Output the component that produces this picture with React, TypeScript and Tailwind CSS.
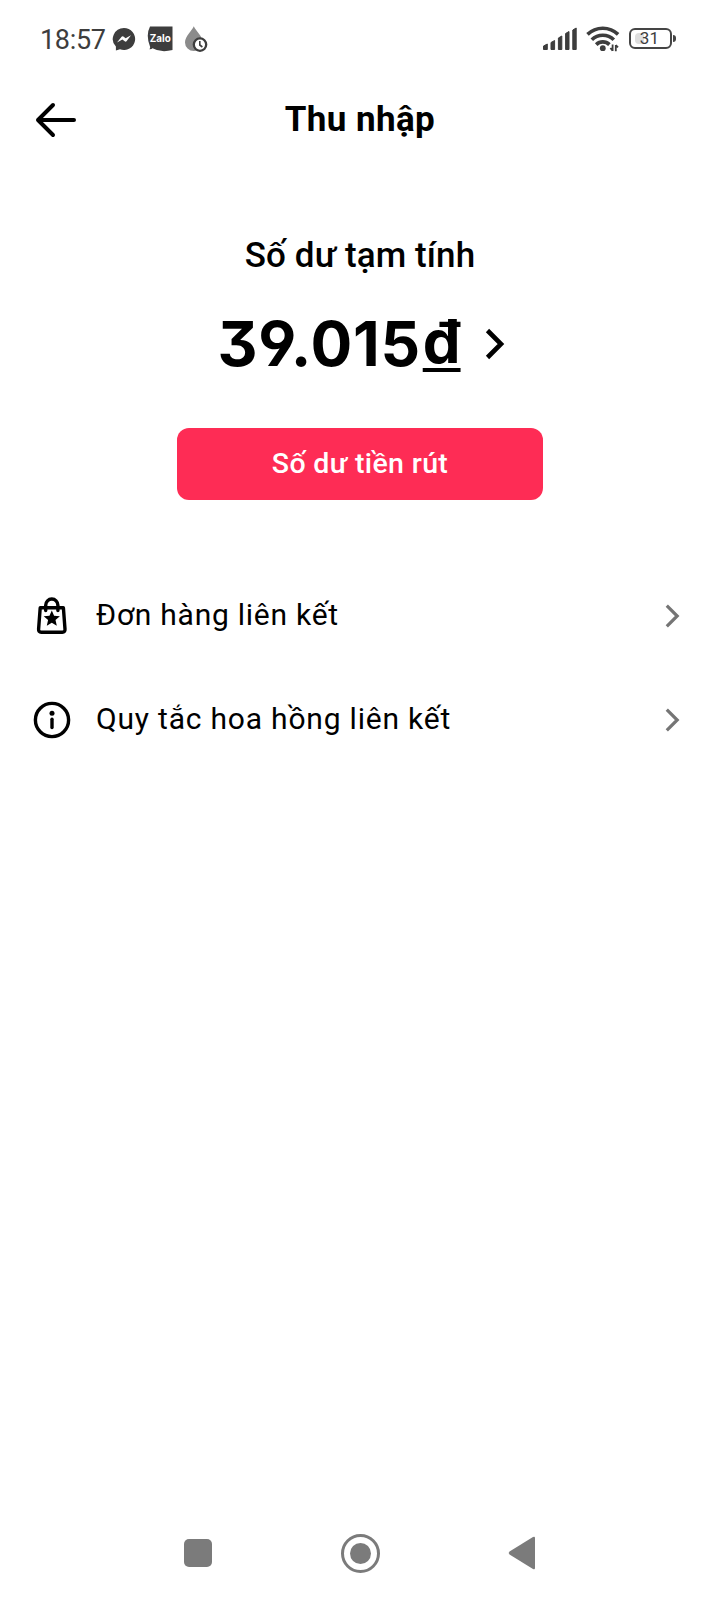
import type { ReactNode } from 'react';

const menuItems = [
  { label: 'Đơn hàng liên kết', icon: <BagIcon />, spacing: 'tracking-[0.75px]' },
  { label: 'Quy tắc hoa hồng liên kết', icon: <InfoIcon />, spacing: 'tracking-[0.8px]' },
];

function BagIcon() {
  return (
    <svg width="38" height="38" viewBox="0 0 38 38" className="overflow-visible" fill="none" stroke="#000" strokeWidth="3.4" strokeLinecap="round" strokeLinejoin="round">
      <path d="M7.2 10.8H30.4L32 32.2Q32.2 35.2 29.4 35.2H8.2Q5.4 35.2 5.6 32.2Z" />
      <path d="M12.7 13.6V8.2A6.1 6.2 0 0 1 24.9 8.2V13.6" />
      <path d="M18.8 13.4l2.3 5.4 5.8.5-4.4 3.8 1.3 5.6-5-3-5 3 1.3-5.6-4.4-3.8 5.8-.5z" fill="#000" stroke="none" />
    </svg>
  );
}

function InfoIcon() {
  return (
    <svg width="38" height="38" viewBox="0 0 38 38" fill="none" stroke="#000" strokeWidth="3.4">
      <circle cx="19" cy="19" r="16.6" />
      <circle cx="19" cy="12.2" r="2.5" fill="#000" stroke="none" />
      <path d="M19 18.2V26.6" strokeLinecap="round" />
    </svg>
  );
}

function StatusBar() {
  return (
    <div className="h-[78px] pl-10 pr-[44px] flex items-center justify-between text-[#3d3d3d]">
      <div className="flex items-center">
        <span className="w-[72px] mt-[2px] text-[27px] leading-none tracking-[-0.3px]">18:57</span>
        <svg width="24" height="26" viewBox="0 0 24 26" className="shrink-0">
          <path d="M12 2A11.2 11 0 0 0 3.9 20.6V24.4L8 23.3A11.2 11 0 1 0 12 2Z" fill="#3d3d3d" />
          <path d="M5 16.4L9.6 10.7Q10.4 9.9 11.4 10.6L13.6 12.3L19 9.3L14.5 15.2Q13.7 16 12.7 15.3L10.4 13.6Z" fill="#fff" />
        </svg>
        <svg width="26" height="26" viewBox="0 0 26 26" className="ml-[11px] shrink-0">
          <path d="M3 .5H25.5V24Q14 27 5.5 22.2Q4.5 23.4 2.4 23.2Q3.5 21.8 3 20.5Q-1.5 9 3 .5Z" fill="#3d3d3d" />
          <text x="13.2" y="16" textAnchor="middle" textLength="21" lengthAdjust="spacingAndGlyphs" fontSize="10.5" fontWeight="700" fill="#fff" fontFamily="Inter, sans-serif">Zalo</text>
        </svg>
        <svg width="24" height="28" viewBox="0 0 24 28" className="ml-[11px] shrink-0">
          <path d="M9.8 1.2C8 5.5 1 11.5 1 17.4A8.9 8.6 0 0 0 18.8 17.4C18.8 11.5 11.6 5.5 9.8 1.2Z" fill="#8b8b8b" />
          <circle cx="16" cy="19.6" r="6.2" fill="#fff" stroke="#3d3d3d" strokeWidth="2.3" />
          <path d="M15.8 16V20L18.4 22" fill="none" stroke="#3d3d3d" strokeWidth="1.6" />
        </svg>
      </div>
      <div className="flex items-center">
        <svg width="35" height="24" viewBox="0 0 35 24" fill="#3d3d3d" stroke="#3d3d3d" strokeWidth="1" strokeLinejoin="round">
          <path d="M.5 19L4.3 17V22.5H.5ZM8 15.5L11.6 13.5V22.5H8ZM15.4 11L18.8 9V22.5H15.4ZM22.6 6.5L26 4.5V22.5H22.6ZM29.8 3L33.2 1V22.5H29.8Z" />
        </svg>
        <svg width="34" height="28" viewBox="0 0 34 28" className="ml-[8px] shrink-0" fill="none" stroke="#3d3d3d" strokeWidth="3.6">
          <path d="M1.5 9.4A22 22 0 0 1 32.1 9.4" />
          <path d="M5.8 14.8A15.6 15.6 0 0 1 27.8 14.8" />
          <path d="M10.2 19.6A9.4 9.4 0 0 1 23.4 19.6" />
          <circle cx="16.8" cy="23.2" r="2.9" fill="#3d3d3d" stroke="none" />
          <path d="M26.6 19.5V26M24.4 23L26.6 25.6M29.8 26.2V20M32 22.4L29.8 20" strokeWidth="1.8" />
        </svg>
        <div className="ml-[9px] -mt-px flex items-center">
          <div className="relative w-[43px] h-[21px] border-2 border-[#454545] rounded-[6px] flex items-center justify-center overflow-hidden">
            <div className="absolute left-1 top-[3px] bottom-[3px] w-[9px] rounded-l-sm bg-[#dedede]" />
            <span className="relative -left-px text-[17px] leading-none tracking-[0.3px]">31</span>
          </div>
          <div className="ml-px w-[3px] h-[7px] rounded-r-sm bg-[#454545]" />
        </div>
      </div>
    </div>
  );
}

function MenuRow({ icon, label, spacing }: { icon: ReactNode; label: string; spacing: string }) {
  return (
    <button className="w-full h-[104px] pl-[33px] pr-[40px] flex items-center">
      {icon}
      <span className={`ml-[25px] -mt-[2px] text-[30px] leading-none whitespace-nowrap ${spacing}`}>{label}</span>
      <svg width="15" height="24" viewBox="0 0 15 24" className="ml-auto" fill="none" stroke="#757575" strokeWidth="3.2">
        <path d="M1.8 1.6L12.2 12L1.8 22.4" />
      </svg>
    </button>
  );
}

export default function App() {
  return (
    <div className="w-[720px] h-[1600px] bg-white text-black flex flex-col font-[Roboto,'Noto_Sans',sans-serif]">
      <StatusBar />

      <header className="h-[84px] grid grid-cols-[76px_1fr_76px] items-center">
        <svg width="42" height="38" viewBox="0 0 42 38" className="ml-[35px]" fill="none" stroke="#000" strokeWidth="4" strokeLinecap="round" strokeLinejoin="round">
          <path d="M39 19H3M18 4L3 19L18 34" />
        </svg>
        <h1 className="-mt-[2px] text-center text-[35px] leading-none tracking-[0.4px] font-bold">Thu nhập</h1>
      </header>

      <section className="pt-[69px] h-[402px] flex flex-col items-center">
        <p className="h-[50px] text-[35px] leading-[50px] tracking-[0.1px] font-medium">Số dư tạm tính</p>
        <div className="mt-[28px] h-[70px] flex items-center">
          <span className="ml-[2px] font-[Inter,sans-serif] text-[62px] leading-none tracking-[0.7px] font-bold [font-feature-settings:'cv09','ss01']">
            39.015
            <span className="inline-block -translate-y-[3px] ml-[2px] text-[60px] leading-none tracking-normal underline decoration-[4px] underline-offset-[5px] [text-decoration-skip-ink:none]">đ</span>
          </span>
          <svg width="20" height="32" viewBox="0 0 20 32" className="ml-[24px]" fill="none" stroke="#000" strokeWidth="4.6">
            <path d="M2.5 2.5L16 16L2.5 29.5" />
          </svg>
        </div>
        <button className="mt-[49px] w-[366px] h-[72px] rounded-[12px] bg-[#fe2c55] text-white text-[28.5px] tracking-[0.35px] font-medium">Số dư tiền rút</button>
      </section>

      <section>
        {menuItems.map((item) => (
          <MenuRow key={item.label} {...item} />
        ))}
      </section>

      <nav className="mt-auto h-[94px] pl-[184px] pr-[184px] flex items-center justify-between">
        <div className="size-7 rounded-[5px] bg-[#7b7b7b]" />
        <div className="size-[39px] rounded-full border-[3px] border-[#7b7b7b] flex items-center justify-center">
          <div className="size-[21px] rounded-full bg-[#7b7b7b]" />
        </div>
        <svg width="28" height="34" viewBox="0 0 28 34">
          <path d="M27 2V32Q27 34 25 33L1.5 18.5Q0 17 1.5 15.5L25 1Q27 0 27 2Z" fill="#7b7b7b" />
        </svg>
      </nav>
    </div>
  );
}
